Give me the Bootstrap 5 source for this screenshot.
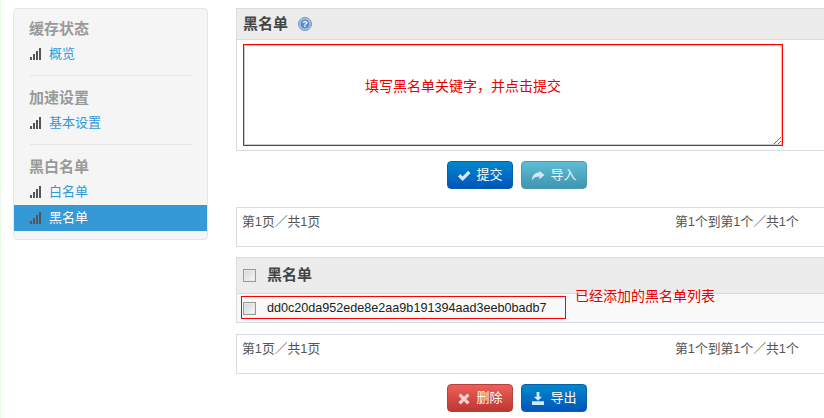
<!DOCTYPE html>
<html lang="zh">
<head>
    <meta charset="UTF-8">
    <meta name="viewport" content="width=device-width, initial-scale=1.0">
    <title>黑名单</title>
    <link href="https://cdn.jsdelivr.net/npm/bootstrap@5.3.0/dist/css/bootstrap.min.css" rel="stylesheet">
    <script src="https://cdn.jsdelivr.net/npm/bootstrap@5.3.0/dist/js/bootstrap.bundle.min.js"></script>
    <style>
        html, body { height: 418px; overflow: hidden; }
        body { font-family: "Liberation Sans", "Noto Sans CJK SC", sans-serif; font-size: 13px; color: #555; background: #fff; }
        .page-wrap { width: 840px; height: 418px; padding: 8px 0 0 12px; border-left: 1px solid #e6fbe6; margin: 0; gap: 28px; }
        .side-box { width: 195px; height: 232px; flex: none; background: #f5f5f5; border: 1px solid #e6e6e6; border-radius: 4px; padding: 10px 0 0; }
        .side-head { font-size: 15px; line-height: 20px; font-weight: 700; color: #999; padding-left: 15px; margin-bottom: 2px; }
        .side-link { display: flex; align-items: center; gap: 7px; height: 26px; padding-left: 16px; font-size: 13px; color: #3399d6; text-decoration: none; }
        .side-link.active { background: #3699d7; color: #fff; }
        .side-rule { height: 1px; background: #e5e5e5; margin: 8px 15px 12px 16px; }
        .signal { width: 12px; height: 12px; flex: none; fill: #555; }
        .main-col { width: 603px; flex: none; position: relative; }
        .head-bar { background: #ececec; border: 1px solid #d5dbe3; height: 32px; padding-left: 6px; font-size: 15px; font-weight: 700; color: #444; gap: 10px; }
        .form-body { height: 111px; padding: 4px 0 0 6px; border: 1px solid #d5dbe3; border-top: 0; }
        .key-input { display: block; width: 540px; height: 102px; border: 1px solid #f00; outline: 0; padding: 2px; background: #fff; box-shadow: inset 0 0 0 1px #ccc; }
        .note-red { position: absolute; color: #e60000; font-size: 14px; line-height: 18px; white-space: nowrap; }
        .note-one { left: 129px; top: 69px; }
        .note-two { left: 339px; top: 279px; }
        .btn-row { height: 28px; gap: 8px; margin-left: 211px; margin-top: 10px; }
        .act-btn { width: 66px; height: 28px; padding: 0; display: flex; align-items: center; justify-content: center; gap: 5px; font-size: 13px; color: #fff; border-radius: 4px; border: 1px solid; --bs-btn-color: #fff; }
        .act-blue { background: linear-gradient(#0088cc, #0055bb); border-color: #0a5fa8; }
        .act-teal { background: linear-gradient(#5fbcd6, #3f95b0); border-color: #4a9ab3; color: #e8f6fa; }
        .act-red { background: linear-gradient(#ee5f5b, #bd362f); border-color: #b5413c; }
        .act-icon { width: 14px; height: 13px; flex: none; fill: #d5e8f8; }
        .act-red .act-icon { fill: #f8d0ce; }
        .pager-box { height: 40px; border: 1px solid #d5dbe3; padding: 5px 38px 0 5px; line-height: 18px; font-size: 12.8px; color: #555; }
        .pager-right { width: 125px; white-space: nowrap; }
        .list-head { height: 37px; margin-top: 10px; gap: 11px; }
        .list-row { height: 29px; background: #f9f9f9; border: 1px solid #d5dbe3; border-top: 0; padding-left: 6px; gap: 11px; color: #222; font-size: 12.6px; position: relative; }
        .row-frame { position: absolute; left: 4px; top: 2px; width: 325px; height: 23px; border: 1px solid #f00; }
        .tick-box { width: 13px; height: 13px; flex: none; border: 1px solid #999; background: linear-gradient(135deg, #d4d4d4, #f8f8f8); box-shadow: inset 0 0 0 1px #e8e8e8; }
        .first-pager { margin-top: 18px; }
        .second-pager { margin-top: 11px; }
    </style>
</head>
<body>
    <div class="page-wrap d-flex align-items-start">
        <div class="side-box">
            <div class="side-head">缓存状态</div>
            <a class="side-link" href="#"><svg class="signal" viewBox="0 0 12 12"><rect x="0" y="9" width="2" height="3"/><rect x="3" y="6" width="2" height="6"/><rect x="6" y="3" width="2" height="9"/><rect x="9" y="0" width="2" height="12"/></svg>概览</a>
            <div class="side-rule"></div>
            <div class="side-head">加速设置</div>
            <a class="side-link" href="#"><svg class="signal" viewBox="0 0 12 12"><rect x="0" y="9" width="2" height="3"/><rect x="3" y="6" width="2" height="6"/><rect x="6" y="3" width="2" height="9"/><rect x="9" y="0" width="2" height="12"/></svg>基本设置</a>
            <div class="side-rule"></div>
            <div class="side-head">黑白名单</div>
            <a class="side-link" href="#"><svg class="signal" viewBox="0 0 12 12"><rect x="0" y="9" width="2" height="3"/><rect x="3" y="6" width="2" height="6"/><rect x="6" y="3" width="2" height="9"/><rect x="9" y="0" width="2" height="12"/></svg>白名单</a>
            <a class="side-link active" href="#"><svg class="signal" viewBox="0 0 12 12"><rect x="0" y="9" width="2" height="3"/><rect x="3" y="6" width="2" height="6"/><rect x="6" y="3" width="2" height="9"/><rect x="9" y="0" width="2" height="12"/></svg>黑名单</a>
        </div>
        <div class="main-col">
            <div class="head-bar d-flex align-items-center">
                <span>黑名单</span>
                <svg width="14" height="14" viewBox="0 0 14 14"><circle cx="7" cy="7" r="6.5" fill="#a9c3e2" stroke="#6f97c6"/><circle cx="7" cy="7" r="4.5" fill="#5f8cc4"/><text x="7" y="10" text-anchor="middle" font-size="9" font-weight="700" font-family="Liberation Sans" fill="#fff">?</text></svg>
            </div>
            <div class="form-body">
                <textarea class="key-input"></textarea>
            </div>
            <div class="note-red note-one">填写黑名单关键字，并点击提交</div>
            <div class="btn-row d-flex">
                <button class="btn act-btn act-blue"><svg class="act-icon" viewBox="0 0 15 14"><path d="M1 8l2.500-2.500L6 8l6-6 2.500 2.500L6 13z"/></svg>提交</button>
                <button class="btn act-btn act-teal"><svg class="act-icon" viewBox="0 0 15 14"><path d="M9 2l5.500 4.500L9 11V8C5.500 8 3 9 1 12c0-5 3-8 8-8.500z"/></svg>导入</button>
            </div>
            <div class="pager-box first-pager d-flex justify-content-between">
                <span>第1页／共1页</span>
                <span class="pager-right">第1个到第1个／共1个</span>
            </div>
            <div class="head-bar list-head d-flex align-items-center">
                <span class="tick-box"></span>
                <span>黑名单</span>
            </div>
            <div class="list-row d-flex align-items-center">
                <span class="row-frame"></span>
                <span class="tick-box"></span>
                <span>dd0c20da952ede8e2aa9b191394aad3eeb0badb7</span>
            </div>
            <div class="note-red note-two">已经添加的黑名单列表</div>
            <div class="pager-box second-pager d-flex justify-content-between">
                <span>第1页／共1页</span>
                <span class="pager-right">第1个到第1个／共1个</span>
            </div>
            <div class="btn-row d-flex">
                <button class="btn act-btn act-red"><svg class="act-icon" viewBox="0 0 15 14"><path d="M4 1.500L7.500 5 11 1.500 13.500 4 10 7.500 13.500 11 11 13.500 7.500 10 4 13.500 1.500 11 5 7.500 1.500 4z"/></svg>删除</button>
                <button class="btn act-btn act-blue"><svg class="act-icon" viewBox="0 0 15 14"><path d="M6 0h3v5h3L7.500 9.500 3 5h3zM1 10h13v4H1z"/></svg>导出</button>
            </div>
        </div>
    </div>
</body>
</html>
